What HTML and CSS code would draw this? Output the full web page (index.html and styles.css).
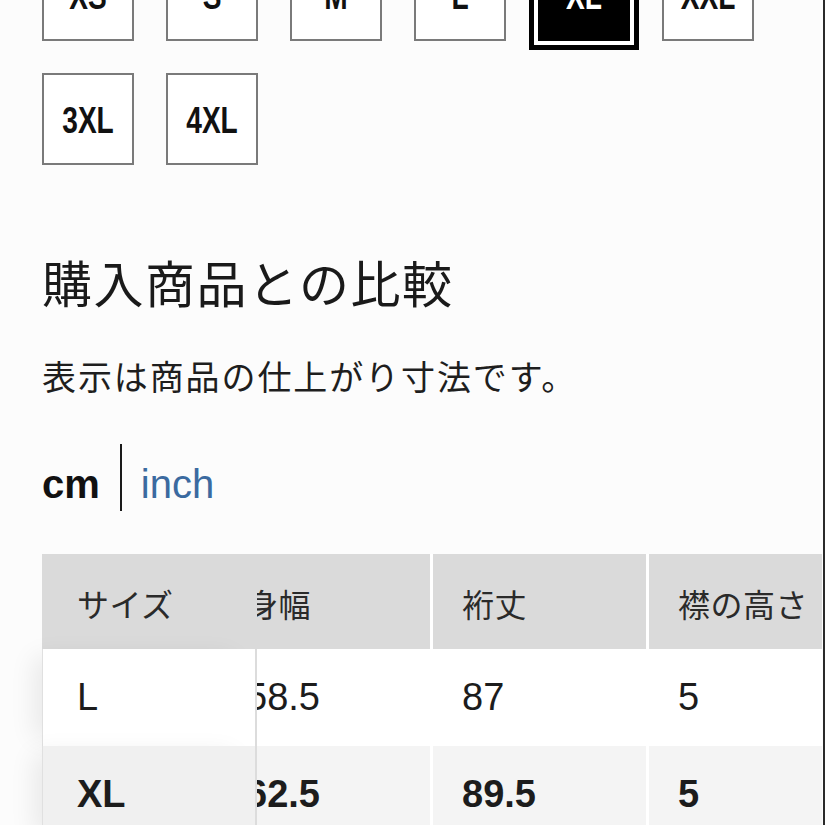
FILE: index.html
```html
<!DOCTYPE html>
<html lang="ja">
<head>
<meta charset="utf-8">
<title>購入商品との比較</title>
<link rel="stylesheet" href="styles.css">
</head>
<body>
<div class="page">
  <div class="sizes">
    <div class="size"><span>XS</span></div>
    <div class="size"><span>S</span></div>
    <div class="size"><span>M</span></div>
    <div class="size"><span>L</span></div>
    <div class="size selected"><span>XL</span></div>
    <div class="size"><span>XXL</span></div>
    <div class="size"><span>3XL</span></div>
    <div class="size"><span>4XL</span></div>
  </div>

  <h2 class="title">購入商品との比較</h2>
  <p class="note">表示は商品の仕上がり寸法です。</p>

  <div class="units">
    <span class="unit active">cm</span>
    <span class="divider"></span>
    <span class="unit link">inch</span>
  </div>

  <div class="table-wrap">
    <div class="trow head">
      <div class="cell fixed">サイズ</div>
      <div class="cell first">身幅</div>
      <div class="cell">裄丈</div>
      <div class="cell">襟の高さ</div>
    </div>
    <div class="trow body">
      <div class="cell fixed">L</div>
      <div class="cell first">58.5</div>
      <div class="cell">87</div>
      <div class="cell">5</div>
    </div>
    <div class="trow body current">
      <div class="cell fixed">XL</div>
      <div class="cell first">62.5</div>
      <div class="cell">89.5</div>
      <div class="cell">5</div>
    </div>
  </div>
</div>
</body>
</html>
```

FILE: styles.css
```css
html, body {
  margin: 0;
  padding: 0;
  overflow: hidden;
}

body {
  background: #fcfcfc;
  color: #1c1c1c;
  font-family: "Liberation Sans", "Noto Sans CJK JP", sans-serif;
}

.page {
  width: 825px;
  height: 825px;
  box-sizing: border-box;
  border-right: 2px solid #2a2a2a;
  overflow: hidden;
  background: #fcfcfc;
}

/* size selector */
.sizes {
  margin: -51px 0 0 42px;
  display: flex;
  flex-wrap: wrap;
  gap: 32px;
}

.size {
  width: 92px;
  height: 92px;
  box-sizing: border-box;
  border: 2px solid #7a7a7a;
  background: #fff;
  display: flex;
  align-items: center;
  justify-content: center;
  font-family: "Liberation Sans", sans-serif;
  font-weight: bold;
  font-size: 36px;
  color: #111;
}

.size span {
  display: inline-block;
  padding-top: 3px;
  transform: scaleX(0.78);
}

.size.selected {
  background: #000;
  border-color: #000;
  color: #fff;
  box-shadow: 0 0 0 4px #fff, 0 0 0 9px #000;
}

/* headings */
.title {
  margin: 86px 0 0 42px;
  font-family: "Noto Sans CJK JP", sans-serif;
  font-weight: 400;
  font-size: 50px;
  line-height: 60px;
  letter-spacing: 1.5px;
  color: #1a1a1a;
}

.note {
  margin: 45px 0 0 42px;
  font-family: "Noto Sans CJK JP", sans-serif;
  font-weight: 400;
  font-size: 34px;
  line-height: 40px;
  letter-spacing: 1.9px;
  color: #1e1e1e;
}

/* unit switch */
.units {
  margin: 48px 0 0 42px;
  display: flex;
  height: 67px;
  align-items: flex-end;
}

.unit {
  font-size: 40px;
  line-height: 40px;
  padding-bottom: 7px;
}

.unit.active {
  font-weight: bold;
  color: #111;
}

.unit.link {
  color: #3b6aa0;
}

.divider {
  align-self: stretch;
  width: 2px;
  background: #1a1a1a;
  margin: 0 19px 0 20px;
}

/* comparison table */
.table-wrap {
  margin: 43px 1px 0 0;
  padding-left: 42px;
  overflow: hidden;
}

.trow {
  display: flex;
  height: 97px;
}

.trow.head {
  height: 95px;
  background: #dadada;
}

.trow.body {
  background: #fff;
}

.trow.current {
  background: #f4f4f4;
  font-weight: bold;
}

.cell {
  flex: 0 0 216px;
  box-sizing: border-box;
  padding-left: 29px;
  border-left: 3px solid #fff;
  display: flex;
  align-items: center;
  font-size: 38px;
  color: #1c1c1c;
  white-space: nowrap;
}

.head .cell {
  font-family: "Noto Sans CJK JP", sans-serif;
  font-size: 32px;
  letter-spacing: 0.5px;
  color: #2a2a2a;
  padding-top: 2px;
}

.cell.first {
  margin-left: -43px;
}

.cell.fixed {
  flex: 0 0 215px;
  position: relative;
  z-index: 1;
  padding-left: 34px;
  border-left: 1px solid #e0e0e0;
  background: inherit;
}

.head .cell.fixed {
  border-left-color: #dadada;
}

.body .cell.fixed {
  border-right: 2px solid #dcdcdc;
  box-shadow: -16px 0 24px -8px rgba(0, 0, 0, 0.08);
}

.current .cell.fixed {
  background: #f0f0f0;
}
```
